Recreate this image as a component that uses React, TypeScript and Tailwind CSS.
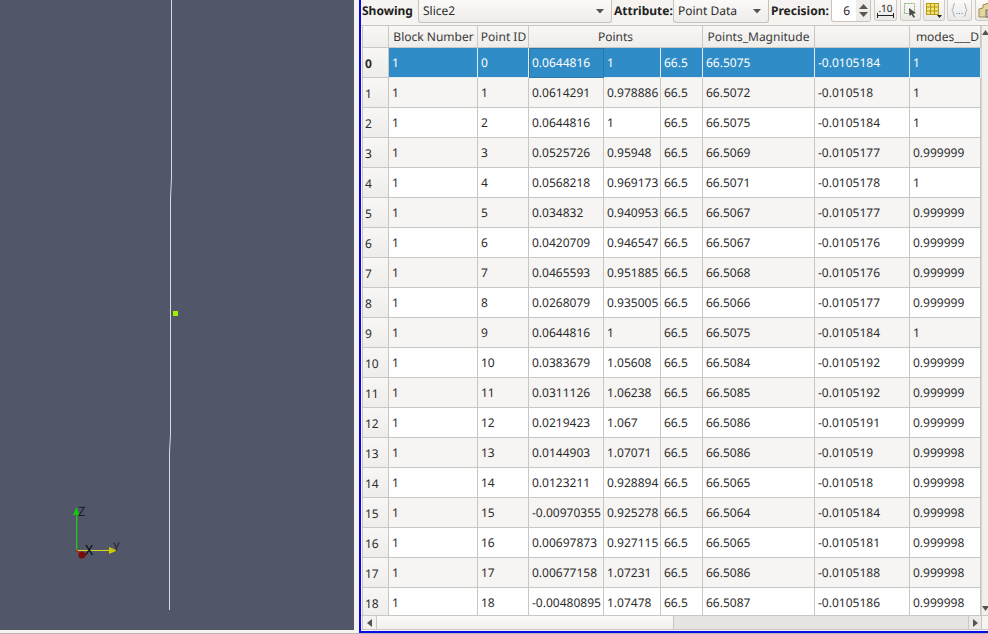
const rows: string[][] = [
  ["1","0","0.0644816","1","66.5","66.5075","-0.0105184","1"],
  ["1","1","0.0614291","0.978886","66.5","66.5072","-0.010518","1"],
  ["1","2","0.0644816","1","66.5","66.5075","-0.0105184","1"],
  ["1","3","0.0525726","0.95948","66.5","66.5069","-0.0105177","0.999999"],
  ["1","4","0.0568218","0.969173","66.5","66.5071","-0.0105178","1"],
  ["1","5","0.034832","0.940953","66.5","66.5067","-0.0105177","0.999999"],
  ["1","6","0.0420709","0.946547","66.5","66.5067","-0.0105176","0.999999"],
  ["1","7","0.0465593","0.951885","66.5","66.5068","-0.0105176","0.999999"],
  ["1","8","0.0268079","0.935005","66.5","66.5066","-0.0105177","0.999999"],
  ["1","9","0.0644816","1","66.5","66.5075","-0.0105184","1"],
  ["1","10","0.0383679","1.05608","66.5","66.5084","-0.0105192","0.999999"],
  ["1","11","0.0311126","1.06238","66.5","66.5085","-0.0105192","0.999999"],
  ["1","12","0.0219423","1.067","66.5","66.5086","-0.0105191","0.999999"],
  ["1","13","0.0144903","1.07071","66.5","66.5086","-0.010519","0.999998"],
  ["1","14","0.0123211","0.928894","66.5","66.5065","-0.010518","0.999998"],
  ["1","15","-0.00970355","0.925278","66.5","66.5064","-0.0105184","0.999998"],
  ["1","16","0.00697873","0.927115","66.5","66.5065","-0.0105181","0.999998"],
  ["1","17","0.00677158","1.07231","66.5","66.5086","-0.0105188","0.999998"],
  ["1","18","-0.00480895","1.07478","66.5","66.5087","-0.0105186","0.999998"],
];

const cols = "grid-cols-[26px_89px_51px_75px_57px_42px_112px_95px_71px]";

function ToolButton({ children, className }: { children: React.ReactNode; className: string }) {
  return (
    <div className={`flex h-[21px] shrink-0 items-center justify-center rounded-b-[3px] border border-t-0 border-[#cfccc8] bg-gradient-to-b from-[#fbfaf9] to-[#ebe9e6] ${className}`}>
      {children}
    </div>
  );
}

function Combo({ label, className }: { label: string; className: string }) {
  return (
    <div className={`flex h-[23px] shrink-0 items-center justify-between rounded-b-[3px] border border-t-0 border-[#c6c3bf] bg-gradient-to-b from-[#fbfaf9] to-[#efedea] pl-[4px] pr-[6px] ${className}`}>
      <span>{label}</span>
      <svg width="9" height="5" viewBox="0 0 9 5"><path d="M0 0h8L4 4.500z" fill="#55524f" /></svg>
    </div>
  );
}

function HeaderCell({ label, className = "" }: { label: string; className?: string }) {
  return (
    <div className={`flex h-[22px] items-center overflow-hidden whitespace-nowrap border-b border-r border-[#c9c7c4] bg-gradient-to-b from-[#f8f7f5] to-[#efedea] text-[#3a3a3a] ${className}`}>
      {label}
    </div>
  );
}

export default function App() {
  return (
    <div
      className="flex h-[634px] w-[988px] flex-col overflow-hidden bg-[#f6f3f0] text-[12px] leading-none text-[#2b2b2b] [text-rendering:geometricPrecision]"
      style={{ fontFamily: '"Noto Sans", sans-serif' }}
    >
      <div className="flex h-[633px] shrink-0">
        <div className="relative h-[630px] w-[354px] shrink-0 bg-[#525669]">
          <svg width="354" height="630" viewBox="0 0 354 630" className="absolute left-0 top-0">
            <path d="M171.500 0V178L170.500 198V435L169.500 452V610" stroke="#d9d9e3" strokeWidth="1" fill="none" />
            <rect x="173" y="311" width="5" height="5" fill="#a2f000" />
            <path d="M76.700 514V550.500" stroke="#22c922" strokeWidth="1.300" />
            <path d="M73 515L76.500 507L79.500 515z" fill="#12c812" />
            <path d="M76 550.500H117" stroke="#d8d820" strokeWidth="1.100" />
            <path d="M109 547L117 550.500L109 554z" fill="#c8c800" />
            <path d="M76 550L82 555" stroke="#b02020" strokeWidth="1.200" />
            <circle cx="82" cy="555" r="3.600" fill="#7a0c0c" />
          </svg>
          <span className="absolute left-[78px] top-[505px] text-[13px] leading-[12px] text-[#1e1e24]">Z</span>
          <span className="absolute left-[85px] top-[545px] text-[14px] leading-[12px] text-[#08080a]">X</span>
          <span className="absolute left-[113px] top-[541px] text-[12px] leading-[12px] text-[#25252c]">Y</span>
        </div>
        <div className="ml-[5px] flex w-[629px] shrink-0 flex-col border-b-2 border-l-2 border-[#0a0ae6] pb-[1px]">
          <div className="flex h-[25px] shrink-0 items-start pl-[1px]">
            <span className="h-[22px] w-[56px] shrink-0 pt-[5px] font-bold text-[#222]">Showing</span>
            <Combo label="Slice2" className="w-[194px]" />
            <span className="ml-[2px] h-[22px] w-[59px] shrink-0 pt-[5px] font-bold text-[#222]">Attribute:</span>
            <Combo label="Point Data" className="w-[96px]" />
            <span className="ml-[2px] h-[22px] w-[60px] shrink-0 pt-[5px] font-bold text-[#222]">Precision:</span>
            <div className="flex h-[22px] w-[40px] shrink-0 items-center rounded-b-[3px] border border-t-0 border-[#c6c3bf] bg-white">
              <span className="w-[24px] pr-[6px] text-right">6</span>
              <div className="flex h-full flex-1 flex-col items-center justify-center gap-[3px] bg-[#efedea]">
                <svg width="9" height="5" viewBox="0 0 9 5"><path d="M0 5h9L4.500 0z" fill="#5a5754" /></svg>
                <svg width="9" height="5" viewBox="0 0 9 5"><path d="M0 0h9L4.500 5z" fill="#5a5754" /></svg>
              </div>
            </div>
            <ToolButton className="ml-[3px] w-[23px] flex-col">
              <span className="text-[10px] leading-[10px] text-[#222]">.10</span>
              <svg width="17" height="5" viewBox="0 0 17 5">
                <path d="M.500 0v5M16.500 0v5M.500 2.500h16" stroke="#222" fill="none" />
              </svg>
            </ToolButton>
            <ToolButton className="ml-[3px] w-[21px]">
              <svg width="16" height="16" viewBox="0 0 16 16">
                <rect x="1.500" y="1.500" width="10" height="10" fill="none" stroke="#7fb069" strokeDasharray="2 1" />
                <path d="M6 6l7 5-3 .7 2 3.300-1.600.8-1.800-3.300L6.500 14z" fill="#4a4a4a" />
              </svg>
            </ToolButton>
            <ToolButton className="ml-[2px] w-[22px]">
              <svg width="20" height="18" viewBox="0 0 20 18">
                <rect x="2.500" y="2.500" width="12" height="11" fill="#f2e27a" stroke="#b89a12" />
                <path d="M6.500 2.500v11M10.500 2.500v11M2.500 6h12M2.500 10h12" stroke="#b89a12" />
                <path d="M13 14h5l-2.500 3z" fill="#222" />
              </svg>
            </ToolButton>
            <ToolButton className="ml-[2px] w-[25px]">
              <svg width="17" height="16" viewBox="0 0 17 16">
                <path d="M4 1.500C2 1.500 3 7 .8 8 3 9 2 14.500 4 14.500M13 1.500C15 1.500 14 7 16.200 8 14 9 15 14.500 13 14.500" stroke="#9aa3ad" fill="none" />
                <path d="M5.500 11.500h1M8 11.500h1M10.500 11.500h1" stroke="#4b7fc4" />
              </svg>
            </ToolButton>
            <ToolButton className="ml-[3px] w-[23px]">
              <svg width="19" height="19" viewBox="0 0 19 19">
                <path d="M2 8l4-1V4l6-2 4 3v11H2z" fill="#e6d69a" stroke="#9c8a4e" />
                <rect x="9" y="9" width="7" height="7" fill="#b8b8b0" stroke="#77756c" />
              </svg>
            </ToolButton>
          </div>

          <div className="flex min-h-0 flex-1 flex-col">
            <div className="flex min-h-0 flex-1 border-t border-[#c9c7c4] pl-[1px]">
              <div className="min-h-0 flex-1 overflow-hidden border-l border-[#c9c7c4]">
                <div className={`grid w-[618px] ${cols}`}>
                  <HeaderCell label="" />
                  <HeaderCell label="Block Number" className="justify-center pl-[1px]" />
                  <HeaderCell label="Point ID" className="justify-center pl-[1px]" />
                  <HeaderCell label="Points" className="col-span-3 justify-center" />
                  <HeaderCell label="Points_Magnitude" className="justify-center" />
                  <HeaderCell label="" />
                  <HeaderCell label="modes___D" className="justify-end pr-[1px]" />
                </div>
                {rows.map((r, i) => {
                  const sel = i === 0;
                  const bg = sel ? "bg-[#308cc6] text-white" : i % 2 === 1 ? "bg-[#f6f5f3]" : "bg-white";
                  return (
                    <div key={i} className={`grid h-[30px] w-[618px] ${cols}`}>
                      <div className={`flex items-center border-b border-r border-[#c9c7c4] bg-gradient-to-b from-[#f8f7f5] to-[#efedea] pl-[2px] pt-[2px] ${sel ? "font-bold" : ""}`}>{i}</div>
                      {r.map((c, j) => (
                        <div
                          key={j}
                          className={`flex items-center overflow-hidden whitespace-nowrap border-b border-r pl-[3px] ${bg} ${sel ? "border-[#e4ebf0]" : "border-[#c9c7c4]"} ${sel && j === 2 ? "outline outline-1 -outline-offset-1 outline-[#2a77a8]" : ""}`}
                        >
                          {c}
                        </div>
                      ))}
                    </div>
                  );
                })}
              </div>
              <div className="flex w-[7px] shrink-0 flex-col justify-between overflow-hidden border-l border-[#d5d2ce] bg-[#f2f0ed] py-[4px]">
                <svg width="7" height="5" viewBox="0 0 7 5"><path d="M0 5h7L3.500 0z" fill="#55524f" /></svg>
                <svg width="7" height="5" viewBox="0 0 7 5"><path d="M0 0h7L3.500 5z" fill="#55524f" /></svg>
              </div>
            </div>
            <div className="flex h-[15px] shrink-0 items-stretch border-y border-[#c9c7c4] pl-[1px] pr-[6px]">
              <div className="flex w-[15px] shrink-0 items-center justify-center border-x border-[#c9c7c4] bg-[#f4f2ef]">
                <svg width="5" height="8" viewBox="0 0 5 8"><path d="M5 0v8L0 4z" fill="#55524f" /></svg>
              </div>
              <div className="w-[296px] shrink-0 bg-gradient-to-b from-[#fbfaf9] to-[#f1efec]" />
              <div className="flex-1 border-l border-[#c9c7c4] bg-[#e7e5e2]" />
              <div className="flex w-[14px] shrink-0 items-center justify-center border-x border-[#c9c7c4] bg-[#eceae7]">
                <svg width="5" height="8" viewBox="0 0 5 8"><path d="M0 0v8l5-4z" fill="#55524f" /></svg>
              </div>
            </div>
          </div>
        </div>
      </div>
      <div className="flex-1 bg-[#b9b7b3]" />
    </div>
  );
}
